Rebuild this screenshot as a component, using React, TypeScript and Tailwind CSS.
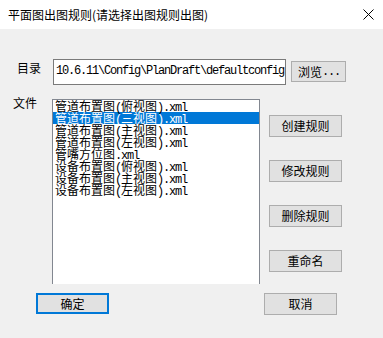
import { Fragment } from 'react';

const files = [
  '管道布置图(俯视图).xml',
  '管道布置图(三视图).xml',
  '管道布置图(主视图).xml',
  '管道布置图(左视图).xml',
  '管嘴方位图.xml',
  '设备布置图(俯视图).xml',
  '设备布置图(主视图).xml',
  '设备布置图(左视图).xml',
];

const cjk = { fontFamily: '"Noto Sans CJK SC", "Noto Sans", sans-serif' };

// half-width ascii runs in mono, squeezed to 6px a char like SimSun
function Mixed({ text }: { text: string }) {
  const parts = text.split(/([\x00-\x7f]+)/).filter(Boolean);
  return (
    <>
      {parts.map((p, i) =>
        /^[\x00-\x7f]+$/.test(p) ? (
          <span key={i} className="font-['Liberation_Mono',monospace] tracking-[-1.2px]">
            {p}
          </span>
        ) : (
          <Fragment key={i}>{p}</Fragment>
        )
      )}
    </>
  );
}

function Btn({ label, primary }: { label: string; primary?: boolean }) {
  return (
    <button
      className={
        'w-[73px] flex items-center justify-center bg-[#e1e1e1] text-[12px] text-black ' +
        (primary ? 'h-[21px] border-2 border-[#0078d7]' : 'h-[22px] border border-[#adadad]')
      }
    >
      {label}
    </button>
  );
}

export default function App() {
  return (
    <div className="w-[383px] h-[338px] bg-[#f0f0f0] flex flex-col overflow-hidden text-black" style={cjk}>
      <div className="h-[29px] bg-white flex items-center justify-between pl-[8px] pr-[9px]">
        <span className="text-[12px] leading-none">平面图出图规则(请选择出图规则出图)</span>
        <svg width="11" height="11" viewBox="0 0 11 11" className="mt-[-1px]">
          <path d="M0.5 0.5 L10.5 10.5 M10.5 0.5 L0.5 10.5" stroke="#000" strokeWidth="1" />
        </svg>
      </div>

      <div className="flex items-start mt-[30px]">
        <span className="ml-[17px] w-[36px] mt-[2px] text-[12px] leading-[14px]">目录</span>
        <div className="w-[233px] h-[26px] bg-white border border-[#7a7a7a] pl-[2px] pt-[2px] text-[12px] leading-[14px] whitespace-nowrap overflow-hidden">
          <Mixed text="10.6.11\Config\PlanDraft\defaultconfig" />
        </div>
        <button className="ml-[5px] mt-[2px] w-[55px] h-[21px] bg-[#e1e1e1] border border-[#adadad] text-[12px] flex items-center pl-[6px]">
          <Mixed text="浏览..." />
        </button>
      </div>

      <div className="flex items-start mt-[14px]">
        <span className="ml-[13px] w-[39px] mt-[-3px] text-[12px] leading-[14px]">文件</span>
        <div className="w-[208px] h-[185px] bg-white border border-b-0 border-[#828790] overflow-hidden">
          {files.map((f, i) => (
            <div
              key={f}
              className={
                'h-[12px] leading-[12px] pl-[2px] text-[12px] whitespace-nowrap ' +
                (i === 1 ? 'bg-[#0078d7] text-white' : '')
              }
            >
              <Mixed text={f} />
            </div>
          ))}
        </div>
        <div className="ml-[9px] mt-[16px] flex flex-col gap-[23px]">
          <Btn label="创建规则" />
          <Btn label="修改规则" />
          <Btn label="删除规则" />
          <Btn label="重命名" />
        </div>
      </div>

      <div className="flex mt-[9px] pl-[36px]">
        <Btn label="确定" primary />
        <div className="ml-[155px]">
          <Btn label="取消" />
        </div>
      </div>
    </div>
  );
}
